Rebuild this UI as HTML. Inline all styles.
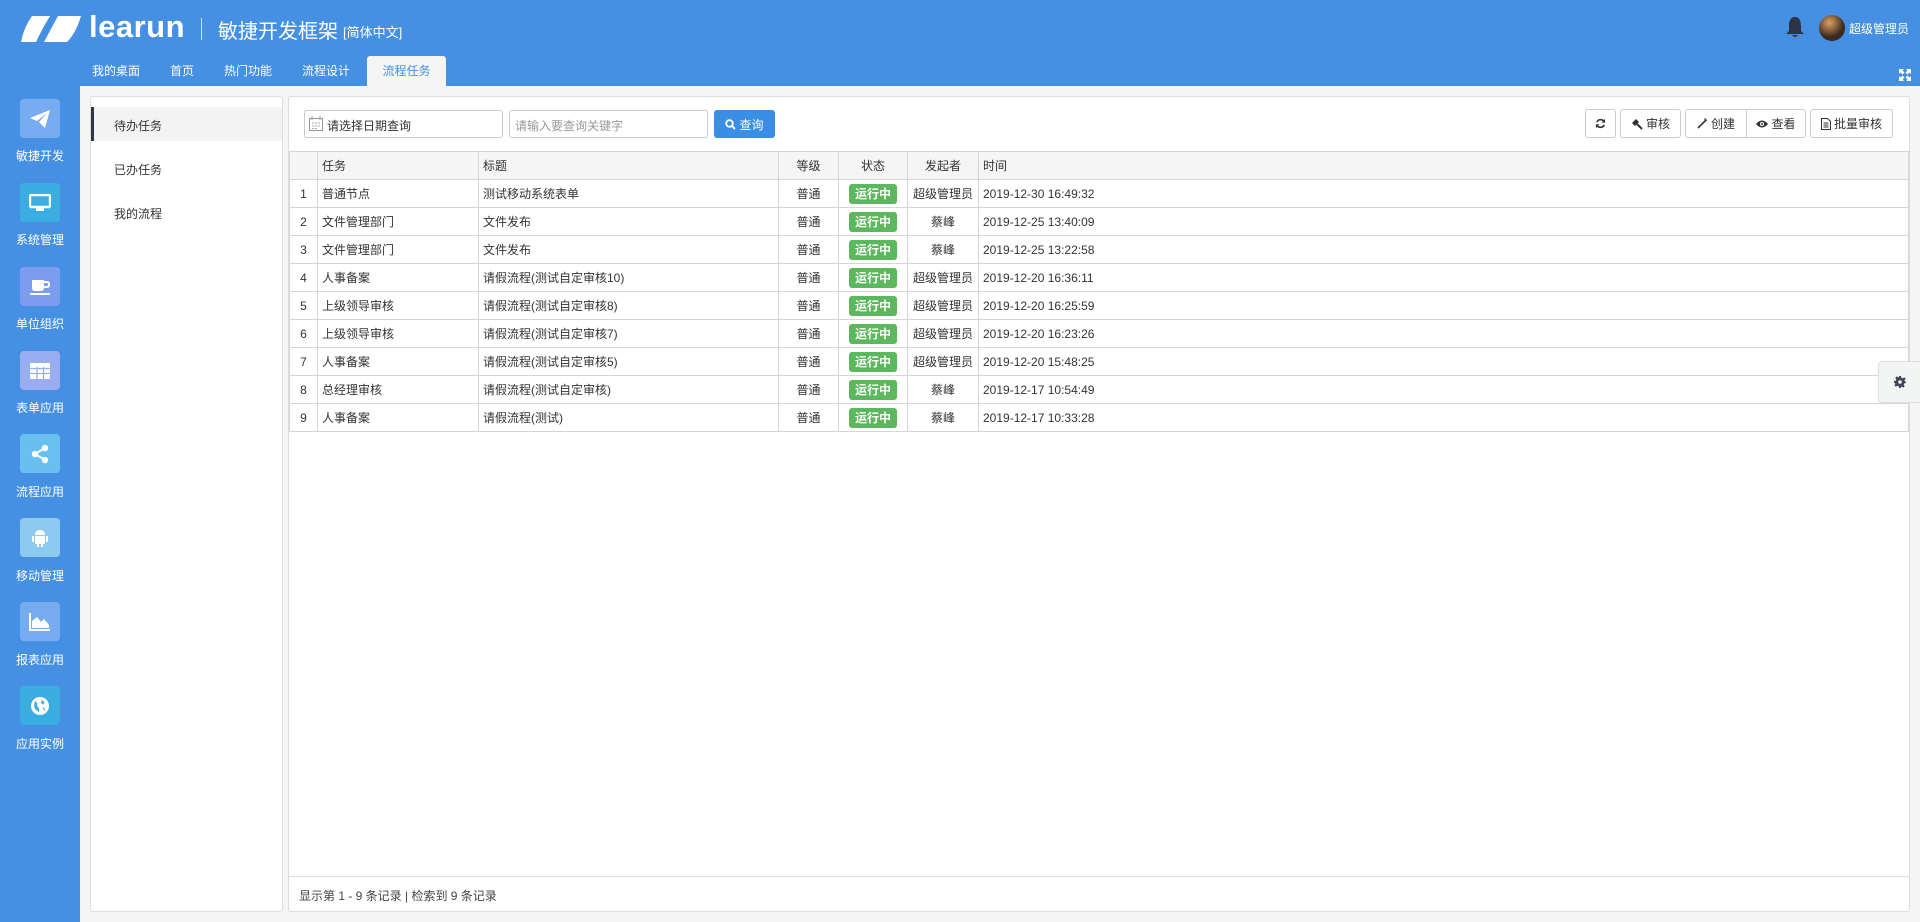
<!DOCTYPE html>
<html><head><meta charset="utf-8"><style>
*{box-sizing:border-box;margin:0;padding:0}
body{width:1920px;height:922px;overflow:hidden;background:#f5f5f5;font-family:"Liberation Sans","Noto Sans CJK SC",sans-serif;font-size:12px;color:#333;position:relative}
.hdr{position:absolute;left:0;top:0;width:1920px;height:86px;background:#4690e3}
.side{position:absolute;left:0;top:86px;width:80px;height:836px;background:#4690e3}
.abs{position:absolute}
.tab{position:absolute;top:56px;height:30px;line-height:30px;color:#fff;font-size:12px}
.ic{position:absolute;left:20px;width:40px;height:39px;border-radius:4px;display:flex;align-items:center;justify-content:center}
.lbl{position:absolute;left:0;width:80px;text-align:center;color:#fff;font-size:12px}
.panel{position:absolute;background:#fff;border:1px solid #ddd;border-radius:3px}
.btn{position:absolute;top:109px;height:29px;border:1px solid #ccc;border-radius:3px;background:#fff;font-size:12px;display:flex;align-items:center;justify-content:center;color:#333}
table{position:absolute;left:289px;top:151px;width:1620px;border-collapse:collapse;font-size:12px}
td,th{height:28px;border:1px solid #d5d5d5;padding:0 4px;font-weight:normal;text-align:left;white-space:nowrap}
th{background:#f5f5f5}
.c{text-align:center}
.bd{display:inline-block;background:#5cb85c;color:#fff;font-weight:bold;padding:0 6px;height:20px;line-height:20px;border-radius:3px;font-size:12px}
</style></head><body>
<div class="hdr"></div>
<svg class="abs" style="left:20px;top:15px" width="62" height="28" viewBox="0 0 62 28"><path d="M12 1 H30 Q22 14 16 27 H1 Q4 12 12 1Z" fill="#fff"/><path d="M38 1 H61 Q56 18 47 27 H24 Q32 12 38 1Z" fill="#fff"/></svg>
<div class="abs" style="left:89px;top:9px;color:#fff;font-size:31px;font-weight:bold;letter-spacing:0.5px">learun</div>
<div class="abs" style="left:201px;top:18px;width:1px;height:22px;background:#cfe0f7"></div>
<div class="abs" style="left:218px;top:15px;color:#fff;font-size:20px">敏捷开发框架</div>
<div class="abs" style="left:343px;top:22px;color:#fff;font-size:13px">[简体中文]</div>
<div class="tab" style="left:92px">我的桌面</div>
<div class="tab" style="left:170px">首页</div>
<div class="tab" style="left:224px">热门功能</div>
<div class="tab" style="left:302px">流程设计</div>
<div class="tab" style="left:367px;width:79px;background:#f5f5f5;color:#4690e3;text-align:center;border-radius:3px 3px 0 0">流程任务</div>
<svg class="abs" style="left:1784px;top:15px" width="22" height="24" viewBox="0 0 22 24"><path d="M11 2 C6 2 5 7 5 11 V16 L2 19 H20 L17 16 V11 C17 7 16 2 11 2Z M8 20 Q11 24 14 20Z" fill="#2b3344"/></svg>
<div class="abs" style="left:1819px;top:15px;width:26px;height:26px;border-radius:50%;background:radial-gradient(circle at 40% 30%,#e0a060,#3a2a20 60%)"></div>
<div class="abs" style="left:1849px;top:20px;color:#fff;font-size:12px">超级管理员</div>
<svg class="abs" style="left:1899px;top:69px" width="12" height="12" viewBox="0 0 12 12" fill="#fff"><path d="M0 0H5L3.5 1.5 5.5 3.5 3.5 5.5 1.5 3.5 0 5Z M12 0V5L10.5 3.5 8.5 5.5 6.5 3.5 8.5 1.5 7 0Z M0 12V7L1.5 8.5 3.5 6.5 5.5 8.5 3.5 10.5 5 12Z M12 12H7L8.5 10.5 6.5 8.5 8.5 6.5 10.5 8.5 12 7Z"/></svg>

<div class="side"></div>
<div class="ic" style="top:99px;background:#78acf0"><svg width="22" height="20" viewBox="0 0 22 20"><path d="M1 9 L21 1 L16 19 L10 13 L18 4 L8 12Z" fill="#fff"/></svg></div>
<div class="lbl" style="top:147px">敏捷开发</div>
<div class="ic" style="top:183px;background:#3aaee0"><svg width="22" height="18" viewBox="0 0 22 18"><rect x="1" y="1" width="20" height="12" rx="1" fill="none" stroke="#fff" stroke-width="2.4"/><rect x="7" y="14" width="8" height="3" fill="#fff"/></svg></div>
<div class="lbl" style="top:231px">系统管理</div>
<div class="ic" style="top:267px;background:#7d9cf0"><svg width="22" height="18" viewBox="0 0 22 18"><path d="M3 2H15V10Q15 13 12 13H6Q3 13 3 10Z" fill="#fff"/><path d="M15 4H18Q20 4 20 6.5 20 9 18 9H15" fill="none" stroke="#fff" stroke-width="2"/><rect x="1" y="15" width="20" height="2" fill="#fff"/></svg></div>
<div class="lbl" style="top:315px">单位组织</div>
<div class="ic" style="top:351px;background:#98aef0"><svg width="20" height="16" viewBox="0 0 20 16"><rect width="20" height="16" rx="1" fill="#fff"/><path d="M0 5.5H20M0 10.5H20M7 4V16M13.5 4V16" stroke="#98aef0" stroke-width="1.3"/></svg></div>
<div class="lbl" style="top:399px">表单应用</div>
<div class="ic" style="top:434px;background:#68c0f0"><svg width="20" height="20" viewBox="0 0 20 20"><circle cx="15" cy="4" r="3.2" fill="#fff"/><circle cx="5" cy="10" r="3.2" fill="#fff"/><circle cx="15" cy="16" r="3.2" fill="#fff"/><path d="M15 4L5 10 15 16" stroke="#fff" stroke-width="2" fill="none"/></svg></div>
<div class="lbl" style="top:483px">流程应用</div>
<div class="ic" style="top:518px;background:#8ccaf0"><svg width="18" height="20" viewBox="0 0 18 20"><path d="M4 7Q4 2 9 2 14 2 14 7Z M4 8H14V16H4Z M1 8H3V14H1Z M15 8H17V14H15Z M6 16H8V19H6Z M10 16H12V19H10Z" fill="#fff"/></svg></div>
<div class="lbl" style="top:567px">移动管理</div>
<div class="ic" style="top:602px;background:#78acf0"><svg width="22" height="18" viewBox="0 0 22 18"><path d="M1 0V17H21" stroke="#fff" stroke-width="2" fill="none"/><path d="M3 15V8L8 4 12 9 15 6 20 12V15Z" fill="#fff"/></svg></div>
<div class="lbl" style="top:651px">报表应用</div>
<div class="ic" style="top:686px;background:#3aaee0"><svg width="20" height="20" viewBox="0 0 20 20"><circle cx="10" cy="10" r="9" fill="#fff"/><path d="M5 5Q8 7 7 10 10 12 9 16 5 14 4 10Z M12 4Q15 6 14 8 12 9 11 6Z M13 11Q15 12 15 15 13 14 13 11Z" fill="#3aaee0"/></svg></div>
<div class="lbl" style="top:735px">应用实例</div>

<div class="panel" style="left:90px;top:96px;width:193px;height:816px"></div>
<div class="abs" style="left:91px;top:107px;width:191px;height:34px;background:#f3f3f3;border-left:3px solid #2c3646"></div>
<div class="abs" style="left:114px;top:117px;font-size:12px">待办任务</div>
<div class="abs" style="left:114px;top:161px;font-size:12px">已办任务</div>
<div class="abs" style="left:114px;top:205px;font-size:12px">我的流程</div>

<div class="panel" style="left:288px;top:96px;width:1622px;height:816px"></div>
<div class="abs" style="left:304px;top:110px;width:199px;height:28px;border:1px solid #ccc;border-radius:3px"></div>
<svg class="abs" style="left:309px;top:116px" width="14" height="15" viewBox="0 0 14 15"><rect x="0.5" y="2.5" width="13" height="12" fill="none" stroke="#999"/><path d="M3 0V4M11 0V4" stroke="#999"/><path d="M3 7h2M6 7h2M9 7h2M3 10h2M6 10h2M9 10h2M3 12.5h2M6 12.5h2" stroke="#aaa"/></svg>
<div class="abs" style="left:327px;top:117px;font-size:12px">请选择日期查询</div>
<div class="abs" style="left:509px;top:110px;width:199px;height:28px;border:1px solid #ccc;border-radius:3px;padding:6px 5px;color:#999">请输入要查询关键字</div>
<div class="abs" style="left:714px;top:110px;width:61px;height:28px;background:#3a8ee6;border-radius:3px;color:#fff;display:flex;align-items:center;justify-content:center;gap:3px"><svg width="11" height="11" viewBox="0 0 11 11"><circle cx="4.5" cy="4.5" r="3.3" fill="none" stroke="#fff" stroke-width="1.8"/><path d="M7 7L10 10" stroke="#fff" stroke-width="2"/></svg>查询</div>

<div class="btn" style="left:1585px;width:31px"><svg width="11" height="11" viewBox="0 0 12 12"><path d="M10 4A4.5 4.5 0 0 0 2 4.5M2 8A4.5 4.5 0 0 0 10 7.5" stroke="#333" stroke-width="1.8" fill="none"/><path d="M11 1V5H7Z M1 11V7H5Z" fill="#333"/></svg></div>
<div class="btn" style="left:1620px;width:61px"><svg width="12" height="12" viewBox="0 0 12 12"><path d="M1 5L5 1 8 4 4 8Z" fill="#333"/><path d="M6 6L11 11" stroke="#333" stroke-width="2"/></svg><span style="margin-left:3px">审核</span></div>
<div class="btn" style="left:1685px;width:62px;border-radius:3px 0 0 3px"><svg width="11" height="11" viewBox="0 0 11 11"><path d="M1 10L9 2" stroke="#333" stroke-width="1.6"/><path d="M8 0V2M10 2H8" stroke="#333"/></svg><span style="margin-left:3px">创建</span></div>
<div class="btn" style="left:1746px;width:60px;border-radius:0 3px 3px 0"><svg width="12" height="8" viewBox="0 0 12 8"><path d="M0 4Q6 -3 12 4 6 11 0 4Z" fill="#333"/><circle cx="6" cy="4" r="2" fill="#fff"/><circle cx="6" cy="4" r="1" fill="#333"/></svg><span style="margin-left:3px">查看</span></div>
<div class="btn" style="left:1810px;width:83px"><svg width="10" height="12" viewBox="0 0 10 12"><path d="M.5 .5H6.5L9.5 3.5V11.5H.5Z M2.5 5H7.5M2.5 7H7.5M2.5 9H7.5" stroke="#333" fill="none"/></svg><span style="margin-left:3px">批量审核</span></div>

<table>
<tr><th style="width:28px"></th><th style="width:161px">任务</th><th style="width:300px">标题</th><th class="c" style="width:60px">等级</th><th class="c" style="width:69px">状态</th><th class="c" style="width:71px">发起者</th><th>时间</th></tr>
<tr><td class="c">1</td><td>普通节点</td><td>测试移动系统表单</td><td class="c">普通</td><td class="c"><span class="bd">运行中</span></td><td class="c">超级管理员</td><td>2019-12-30 16:49:32</td></tr>
<tr><td class="c">2</td><td>文件管理部门</td><td>文件发布</td><td class="c">普通</td><td class="c"><span class="bd">运行中</span></td><td class="c">蔡峰</td><td>2019-12-25 13:40:09</td></tr>
<tr><td class="c">3</td><td>文件管理部门</td><td>文件发布</td><td class="c">普通</td><td class="c"><span class="bd">运行中</span></td><td class="c">蔡峰</td><td>2019-12-25 13:22:58</td></tr>
<tr><td class="c">4</td><td>人事备案</td><td>请假流程(测试自定审核10)</td><td class="c">普通</td><td class="c"><span class="bd">运行中</span></td><td class="c">超级管理员</td><td>2019-12-20 16:36:11</td></tr>
<tr><td class="c">5</td><td>上级领导审核</td><td>请假流程(测试自定审核8)</td><td class="c">普通</td><td class="c"><span class="bd">运行中</span></td><td class="c">超级管理员</td><td>2019-12-20 16:25:59</td></tr>
<tr><td class="c">6</td><td>上级领导审核</td><td>请假流程(测试自定审核7)</td><td class="c">普通</td><td class="c"><span class="bd">运行中</span></td><td class="c">超级管理员</td><td>2019-12-20 16:23:26</td></tr>
<tr><td class="c">7</td><td>人事备案</td><td>请假流程(测试自定审核5)</td><td class="c">普通</td><td class="c"><span class="bd">运行中</span></td><td class="c">超级管理员</td><td>2019-12-20 15:48:25</td></tr>
<tr><td class="c">8</td><td>总经理审核</td><td>请假流程(测试自定审核)</td><td class="c">普通</td><td class="c"><span class="bd">运行中</span></td><td class="c">蔡峰</td><td>2019-12-17 10:54:49</td></tr>
<tr><td class="c">9</td><td>人事备案</td><td>请假流程(测试)</td><td class="c">普通</td><td class="c"><span class="bd">运行中</span></td><td class="c">蔡峰</td><td>2019-12-17 10:33:28</td></tr>
</table>
<div class="abs" style="left:289px;top:876px;width:1620px;height:1px;background:#ddd"></div>
<div class="abs" style="left:299px;top:887px;font-size:12px;color:#444">显示第 1 - 9 条记录 | 检索到 9 条记录</div>

<div class="abs" style="left:1878px;top:361px;width:42px;height:42px;background:#f3f5f5;border:1px solid #ddd;border-right:none;border-radius:4px 0 0 4px;display:flex;align-items:center;justify-content:center"><svg width="12" height="12" viewBox="0 0 12 12"><path d="M5 0H7L7.3 1.8 8.8 2.4 10.2 1.3 10.7 1.8 11.6 2.7 10.5 4.2 11 5.6 12 5.8V7L10.3 7.3 9.7 8.8 10.7 10.2 9.3 11.6 7.9 10.6 7 11V12H5L4.7 10.3 3.3 9.7 1.8 10.7.4 9.3 1.4 7.9.9 7H0V5L1.7 4.7 2.3 3.3 1.3 1.8 2.7.4 4.1 1.4 5 1Z" fill="#445"/><circle cx="6" cy="6" r="1.8" fill="#f3f5f5"/></svg></div>
</body></html>
